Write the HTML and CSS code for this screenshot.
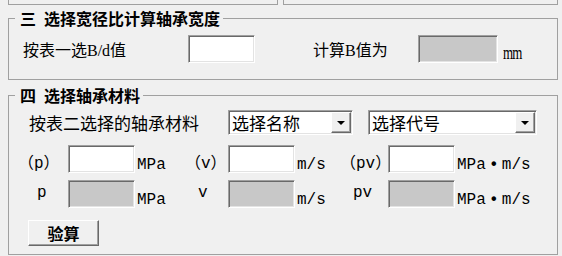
FILE: index.html
```html
<!DOCTYPE html>
<html lang="zh-CN">
<head>
    <meta charset="UTF-8">
    <meta name="viewport" content="width=device-width, initial-scale=1.0">
    <title>轴承计算</title>
    <link rel="stylesheet" href="styles.css">
</head>
<body>

    <!-- 上方两个分组框的底边 -->
    <div class="top-stubs">
        <div class="stub stub-left"></div>
        <div class="stub stub-right"></div>
    </div>

    <!-- 三: 宽径比 -->
    <fieldset class="group group-b">
        <legend><span class="num">三</span>选择宽径比计算轴承宽度</legend>
        <div class="row-b">
            <label class="lbl-bd" for="bd">按表一选B/d值</label>
            <input type="text" id="bd" class="box">
            <label class="lbl-calc" for="bval">计算B值为</label>
            <input type="text" id="bval" class="box box-ro box-wide" readonly>
            <span class="unit-mm">mm</span>
        </div>
    </fieldset>

    <!-- 四: 轴承材料 -->
    <fieldset class="group group-mat">
        <legend><span class="num">四</span>选择轴承材料</legend>

        <div class="row-mat">
            <span class="lbl-mat">按表二选择的轴承材料</span>
            <div class="combo combo-name">
                <span class="combo-text">选择名称</span>
                <span class="combo-btn"></span>
            </div>
            <div class="combo combo-code">
                <span class="combo-text">选择代号</span>
                <span class="combo-btn"></span>
            </div>
        </div>

        <div class="grid-row row-allow">
            <span class="sym sym-p">（p）</span>
            <input type="text" class="box">
            <span class="unit">MPa</span>
            <span class="sym sym-v">（v）</span>
            <input type="text" class="box">
            <span class="unit">m/s</span>
            <span class="sym sym-pv">（pv）</span>
            <input type="text" class="box">
            <span class="unit">MPa<span class="dot">•</span>m/s</span>
        </div>

        <div class="grid-row row-calc">
            <span class="sym sym-p">p</span>
            <input type="text" class="box box-ro" readonly>
            <span class="unit">MPa</span>
            <span class="sym sym-v">v</span>
            <input type="text" class="box box-ro" readonly>
            <span class="unit">m/s</span>
            <span class="sym sym-pv">pv</span>
            <input type="text" class="box box-ro" readonly>
            <span class="unit">MPa<span class="dot">•</span>m/s</span>
        </div>

        <button class="btn-calc">验算</button>
    </fieldset>

</body>
</html>
```

FILE: styles.css
```css
/* 基本 */
* {
    box-sizing: border-box;
    margin: 0;
    padding: 0;
}

body {
    width: 562px;
    height: 256px;
    overflow: hidden;
    padding: 0 4px 0 8px;
    background: #f0f0f0;
    color: #000;
    font-family: "Noto Sans CJK SC", sans-serif;
    font-size: 16px;
}

/* 上方残留的分组框 */
.top-stubs {
    display: flex;
    gap: 5px;
}

.stub {
    height: 5px;
    border: 1px solid #a0a0a0;
    border-top: none;
}

.stub-left {
    width: 270px;
}

.stub-right {
    flex: 1;
}

/* 分组框 */
.group {
    width: 550px;
    min-width: 0;
    border: 1px solid #a0a0a0;
}

.group legend {
    margin-left: 6px;
    padding: 0 3px 0 5px;
    font-size: 16px;
    font-weight: bold;
    line-height: 17px;
}

.group .num {
    margin-right: 8px;
}

.group-b {
    margin-top: 5px;
    padding: 8px 0 16px;
}

.group-mat {
    margin-top: 7px;
    padding: 6px 0 8px;
}

/* 输入框 (凹陷) */
.box {
    width: 67px;
    height: 28px;
    border: 1px solid;
    border-color: #a0a0a0 #fff #fff #a0a0a0;
    box-shadow: inset 1px 1px 0 #696969, inset -1px -1px 0 #e3e3e3;
    background: #fff;
    outline: none;
    font-size: 15px;
}

.box-ro {
    background: #c8c8c8;
}

.box-wide {
    width: 80px;
}

/* 三 */
.row-b {
    display: flex;
    align-items: center;
    height: 28px;
}

.lbl-bd,
.lbl-calc {
    font-family: "Liberation Serif", "Noto Sans CJK SC", serif;
    font-size: 16px;
}

.lbl-bd {
    margin-left: 14px;
    width: 165px;
}

.lbl-calc {
    margin-left: 58px;
    width: 105px;
}

.unit-mm {
    align-self: flex-end;
    margin: 0 0 2px 5px;
    font-family: "Liberation Serif", serif;
    font-size: 18px;
    line-height: 16px;
    letter-spacing: -1px;
    transform: scaleX(0.72);
    transform-origin: left;
}

/* 四 */
.row-mat {
    display: flex;
    align-items: center;
    height: 25px;
}

.lbl-mat {
    margin-left: 20px;
    width: 199px;
    font-size: 17px;
    line-height: 1;
}

.combo {
    display: flex;
    align-items: center;
    height: 25px;
    padding: 2px 1px 2px 3px;
    border: 1px solid;
    border-color: #a0a0a0 #fff #fff #a0a0a0;
    box-shadow: inset 1px 1px 0 #696969, inset -1px -1px 0 #e3e3e3;
    background: #fff;
}

.combo-name {
    width: 125px;
}

.combo-code {
    width: 169px;
    margin-left: 15px;
}

.combo-text {
    font-size: 17px;
    line-height: 1;
}

.combo-btn {
    display: flex;
    align-items: center;
    justify-content: center;
    margin-left: auto;
    width: 20px;
    height: 21px;
    border: 1px solid;
    border-color: #fff #696969 #696969 #fff;
    box-shadow: inset -1px -1px 0 #a0a0a0;
    background: #f0f0f0;
}

.combo-btn::after {
    content: "";
    border-left: 4px solid transparent;
    border-right: 4px solid transparent;
    border-top: 4px solid #000;
}

.grid-row {
    display: grid;
    grid-template-columns: 59px 67px 30px 63px 67px 29px 64px 67px auto;
    height: 28px;
    align-items: center;
}

.row-allow {
    margin-top: 10px;
}

.row-calc {
    margin-top: 7px;
}

.sym {
    font-family: "Liberation Mono", "Noto Sans CJK SC", monospace;
    font-size: 16px;
    line-height: 16px;
}

.row-allow .sym {
    align-self: end;
    margin-bottom: 1px;
}

.row-allow .sym-p { padding-left: 9px; }
.row-allow .sym-v { padding-left: 20px; }
.row-allow .sym-pv { padding-left: 16px; }

.row-calc .sym {
    margin-top: -3px;
}

.row-calc .sym-p { padding-left: 28px; }
.row-calc .sym-v { padding-left: 33px; }
.row-calc .sym-pv { padding-left: 29px; }

.unit {
    align-self: end;
    padding-left: 2px;
    font-family: "Liberation Mono", monospace;
    font-size: 16px;
    line-height: 15px;
    white-space: nowrap;
}

.unit .dot {
    display: inline-block;
    width: 16px;
    text-align: center;
    font-family: "Liberation Sans", sans-serif;
    font-weight: bold;
}

/* 按钮 */
.btn-calc {
    display: block;
    margin: 12px 0 0 19px;
    width: 71px;
    height: 26px;
    border: 1px solid;
    border-color: #fff #696969 #696969 #fff;
    box-shadow: inset -1px -1px 0 #a0a0a0;
    background: #f0f0f0;
    font-family: "Noto Sans CJK SC", sans-serif;
    font-size: 16px;
    font-weight: bold;
    line-height: 1;
    color: #000;
}
```
